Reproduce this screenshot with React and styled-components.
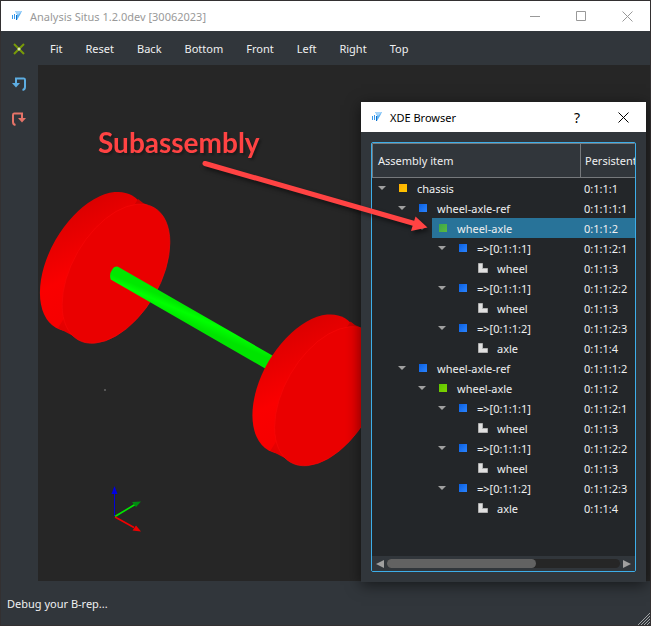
import React from "react";
import styled, { createGlobalStyle } from "styled-components";

const Global = createGlobalStyle`
  * { box-sizing: border-box; }
  body {
    margin: 0;
    background: #333031;
    color: #eff0f1;
    font: 11px/17px "Noto Sans", "Open Sans", sans-serif;
  }
  button {
    padding: 0;
    border: 0;
    background: none;
    color: inherit;
    font: inherit;
  }
  svg { display: block; }
`;

const Desktop = styled.div`
  min-height: 100vh;
  padding: 1px;
  display: flex;
`;

const AppWindow = styled.main`
  position: relative;
  flex: 1;
  min-width: 0;
  display: flex;
  flex-direction: column;
  background: #31363b;
`;

const TitleBar = styled.header`
  height: 30px;
  display: flex;
  align-items: center;
  padding-left: 10px;
  background: #fff;
  color: ${(p) => (p.$active ? "#000" : "#999")};
`;

const Title = styled.h1`
  flex: 1;
  margin: 0;
  padding-left: 7px;
  font-size: 11px;
  font-weight: 400;
  white-space: nowrap;
`;

const CaptionButton = styled.button`
  width: 46px;
  height: 30px;
  display: grid;
  place-items: center;
  font-size: 14px;
`;

const ToolBar = styled.nav`
  height: 34px;
  display: flex;
  align-items: center;
  gap: 23px;
  padding-top: 1px;
`;

const ToolButton = styled.button`
  height: 24px;
  white-space: nowrap;
`;

const IconButton = styled.button`
  width: 26px;
  height: 35px;
  display: grid;
  place-items: center;
  margin-left: ${(p) => (p.$inset ? "5px" : "0")};
  margin-right: ${(p) => (p.$inset ? "-5px" : "0")};
`;

const Workspace = styled.div`
  flex: 1;
  display: flex;
`;

const SideBar = styled.aside`
  width: 37px;
  display: flex;
  flex-direction: column;
  align-items: center;
  padding: 1px 2px 0 0;
`;

const Viewport = styled.section`
  flex: 1;
  min-width: 0;
  background: #262626;
`;

const Scene = styled.svg`
  width: 100%;
  height: auto;
`;

const StatusBar = styled.footer`
  height: 44px;
  display: flex;
  align-items: center;
  justify-content: space-between;
  padding-left: 6px;
`;

const Grip = styled.svg`
  align-self: flex-end;
`;

const Dialog = styled.section`
  position: absolute;
  top: 101px;
  right: 4px;
  width: 285px;
  background: #31363b;
  box-shadow: 0 3px 14px rgba(0, 0, 0, 0.55);
`;

const DialogBody = styled.div`
  padding: 10px;
`;

const TreeFrame = styled.div`
  height: 430px;
  display: flex;
  flex-direction: column;
  border: 1px solid #3daee9;
  border-radius: 2px;
  background: #232629;
  overflow: hidden;
`;

const TreeArea = styled.div`
  flex: 1;
  overflow: hidden;
`;

const Tree = styled.table`
  width: 100%;
  table-layout: fixed;
  border-collapse: separate;
  border-spacing: 0;
`;

const HeadCell = styled.th`
  width: ${(p) => (p.$main ? "209px" : "auto")};
  height: 35px;
  padding: 0 0 0 ${(p) => (p.$main ? "5px" : "4px")};
  border: 1px solid #76797c;
  border-left-width: ${(p) => (p.$main ? "1px" : "0")};
  border-right-width: ${(p) => (p.$main ? "1px" : "0")};
  background: #31363b;
  font-weight: 400;
  text-align: left;
  white-space: nowrap;
`;

const Row = styled.tr`
  height: 20px;
`;

const ItemCell = styled.td`
  padding: 0 0 0 ${(p) => p.$level * 20}px;
`;

const IdCell = styled.td`
  padding: 0 0 0 3px;
  background: ${(p) => (p.$selected ? "#287399" : "none")};
  white-space: nowrap;
`;

const Item = styled.div`
  height: 20px;
  display: flex;
  align-items: center;
`;

const Twisty = styled.button`
  width: 20px;
  height: 20px;
  display: grid;
  place-items: center;
`;

const TwistySpace = styled.span`
  width: 20px;
`;

const ItemLabel = styled.span`
  flex: 1;
  height: 20px;
  display: flex;
  align-items: center;
  gap: 3px;
  background: ${(p) => (p.$selected ? "#287399" : "none")};
  white-space: nowrap;
`;

const Glyph = styled.span`
  width: 22px;
  display: grid;
  place-items: center;
`;

const ScrollRow = styled.div`
  height: 15px;
  display: flex;
  align-items: center;
  gap: 3px;
  padding: 0 4px;
  background: #31363b;
`;

const ScrollTrack = styled.div`
  flex: 1;
  height: 9px;
  border-radius: 5px;
  background: #262626;
`;

const ScrollThumb = styled.div`
  width: 64%;
  height: 9px;
  border-radius: 5px;
  background: #626262;
`;

const Callout = styled.p`
  position: absolute;
  top: 125px;
  left: 97px;
  margin: 0;
  color: #ff4343;
  font: 700 28px/32px Lato, sans-serif;
  filter: drop-shadow(2px 2px 1px rgba(0, 0, 0, 0.3));
`;

const CalloutArrow = styled.svg`
  position: absolute;
  top: 154px;
  right: 217px;
  pointer-events: none;
  filter: drop-shadow(2px 3px 2px rgba(0, 0, 0, 0.5));
`;

const Logo = () => (
  <svg width="12" height="12" viewBox="0 0 12 12" aria-hidden="true">
    <path d="M4 1H11L9 5L6 10H5L6 4.500Z" fill="#63b4f3" />
    <path d="M4 1H11L7 5Z" fill="#a9d6fa" />
    <path d="M1.5 5V9M3.500 4V9" stroke="#3a9aea" />
    <path d="M5.500 5V10" stroke="#0b6fcb" />
  </svg>
);

const CloseGlyph = () => (
  <svg width="11" height="11" viewBox="0 0 11 11" aria-hidden="true">
    <path d="M0.5 0.5L10.5 10.5M10.5 0.5L0.5 10.5" stroke="currentColor" />
  </svg>
);

const TurnGlyph = ({ color, flip }) => (
  <svg width="14" height="14" viewBox="0 0 14 14" fill="none" aria-hidden="true">
    <g transform={flip ? "translate(14 0) scale(-1 1)" : undefined}>
      <path
        d="M4 6V1.5H12Q13 1.5 13 3V10Q13 12.5 10.5 13"
        stroke={color}
        strokeWidth="2"
      />
      <path d="M0 6H8L4 10.5Z" fill={color} />
    </g>
  </svg>
);

const tones = {
  root: ["#ffae00", "#ffc800"],
  ref: ["#0a5fe0", "#2b84ff"],
  group: ["#5cc400", "#80d400"],
  picked: ["#3ba84a", "#5cba40"],
};

const Swatch = styled.span`
  width: 8px;
  height: 8px;
  background: linear-gradient(135deg, ${(p) => tones[p.$type].join(", ")});
`;

const TypeGlyph = ({ type }) =>
  type === "part" ? (
    <svg width="10" height="10" viewBox="0 0 10 10" aria-hidden="true">
      <path d="M0.5 0.5H4.5V5.5H9.5V9.5H0.5Z" fill="#e0e0e0" stroke="#b0b0b0" />
    </svg>
  ) : (
    <Swatch $type={type} />
  );

const subtree = [
  { level: 3, type: "ref", name: "=>[0:1:1:1]", id: "0:1:1:2:1" },
  { level: 4, type: "part", name: "wheel", id: "0:1:1:3" },
  { level: 3, type: "ref", name: "=>[0:1:1:1]", id: "0:1:1:2:2" },
  { level: 4, type: "part", name: "wheel", id: "0:1:1:3" },
  { level: 3, type: "ref", name: "=>[0:1:1:2]", id: "0:1:1:2:3" },
  { level: 4, type: "part", name: "axle", id: "0:1:1:4" },
];

const rows = [
  { level: 0, type: "root", name: "chassis", id: "0:1:1:1" },
  { level: 1, type: "ref", name: "wheel-axle-ref", id: "0:1:1:1:1" },
  { level: 2, type: "picked", name: "wheel-axle", id: "0:1:1:2", selected: true },
  ...subtree,
  { level: 1, type: "ref", name: "wheel-axle-ref", id: "0:1:1:1:2" },
  { level: 2, type: "group", name: "wheel-axle", id: "0:1:1:2" },
  ...subtree,
];

const views = ["Fit", "Reset", "Back", "Bottom", "Front", "Left", "Right", "Top"];

const Wheel = () => (
  <>
    <ellipse cx="94" cy="261.7" rx="76.4" ry="44.2" transform="rotate(-60 94 261.7)" fill="url(#rim)" />
    <path d="M138 199Q142 203 148 205L77 338L58 328Z" fill="url(#rim)" />
    <ellipse
      cx="116"
      cy="273.7"
      rx="76.2"
      ry="44"
      transform="rotate(-60 116 273.7)"
      fill="#ea0000"
      stroke="#f80808"
      strokeWidth="0.6"
    />
  </>
);

const Model = () => (
  <Scene viewBox="38 65 612 516" role="img" aria-label="Two wheels joined by an axle">
    <defs>
      <linearGradient id="rim" gradientUnits="userSpaceOnUse" x1="140" y1="195" x2="50" y2="335">
        <stop offset="0" stopColor="#c80000" />
        <stop offset="0.2" stopColor="#e00000" />
        <stop offset="0.5" stopColor="#fa0000" />
        <stop offset="0.8" stopColor="#f40000" />
        <stop offset="1" stopColor="#d80000" />
      </linearGradient>
      <linearGradient id="rod" gradientUnits="userSpaceOnUse" x1="190" y1="308" x2="184" y2="322">
        <stop offset="0" stopColor="#00e800" />
        <stop offset="0.4" stopColor="#00ff00" />
        <stop offset="1" stopColor="#00e400" />
      </linearGradient>
    </defs>
    <Wheel />
    <path d="M118 266.7L282 361L272 372.5L110.7 279.5Q109 274 112 270Q114 266 118 266.7Z" fill="url(#rod)" />
    <g transform="translate(212.5 122.5)">
      <Wheel />
    </g>
    <rect x="104" y="389" width="2" height="2" fill="#555" />
    <path d="M114.5 516V492" stroke="#0000d8" />
    <path d="M114.5 486L117.5 494H111.5Z" fill="#0000e0" />
    <path d="M115 516.5L135 504.5" stroke="#00e800" strokeWidth="1.6" />
    <path d="M141 501.5L136 507L132 502Z" fill="#008c10" />
    <path d="M115 517L134 527.5" stroke="#f00000" strokeWidth="1.6" />
    <path d="M141 531.5L132.500 530.5L136 525.500Z" fill="#f00000" />
  </Scene>
);

const TreeRow = ({ row }) => (
  <Row>
    <ItemCell $level={row.level}>
      <Item>
        {row.type === "part" ? (
          <TwistySpace />
        ) : (
          <Twisty aria-label={`Collapse ${row.name}`}>
            <svg width="8" height="4" viewBox="0 0 8 4" aria-hidden="true">
              <path d="M0 0H8L4 4Z" fill="#a0a0a0" />
            </svg>
          </Twisty>
        )}
        <ItemLabel $selected={row.selected}>
          <Glyph>
            <TypeGlyph type={row.type} />
          </Glyph>
          {row.name}
        </ItemLabel>
      </Item>
    </ItemCell>
    <IdCell $selected={row.selected}>{row.id}</IdCell>
  </Row>
);

const XdeBrowser = () => (
  <Dialog role="dialog" aria-label="XDE Browser">
    <TitleBar $active>
      <Logo />
      <Title as="h2">XDE Browser</Title>
      <CaptionButton aria-label="Help">?</CaptionButton>
      <CaptionButton aria-label="Close">
        <CloseGlyph />
      </CaptionButton>
    </TitleBar>
    <DialogBody>
      <TreeFrame>
        <TreeArea>
          <Tree>
            <thead>
              <tr>
                <HeadCell $main>Assembly item</HeadCell>
                <HeadCell>Persistent</HeadCell>
              </tr>
            </thead>
            <tbody>
              {rows.map((row, i) => (
                <TreeRow key={i} row={row} />
              ))}
            </tbody>
          </Tree>
        </TreeArea>
        <ScrollRow>
          <button aria-label="Scroll left">
            <svg width="8" height="8" viewBox="0 0 8 8">
              <path d="M8 0V8L0 4Z" fill="#a0a0a0" />
            </svg>
          </button>
          <ScrollTrack>
            <ScrollThumb />
          </ScrollTrack>
          <button aria-label="Scroll right">
            <svg width="8" height="8" viewBox="0 0 8 8">
              <path d="M0 0V8L8 4Z" fill="#a0a0a0" />
            </svg>
          </button>
        </ScrollRow>
      </TreeFrame>
    </DialogBody>
  </Dialog>
);

export default function App() {
  return (
    <Desktop>
      <Global />
      <AppWindow>
        <TitleBar>
          <Logo />
          <Title>Analysis Situs 1.2.0dev [30062023]</Title>
          <CaptionButton aria-label="Minimize">
            <svg width="10" height="10" viewBox="0 0 10 10" aria-hidden="true">
              <path d="M0 5.5H10" stroke="currentColor" />
            </svg>
          </CaptionButton>
          <CaptionButton aria-label="Maximize">
            <svg width="10" height="10" viewBox="0 0 10 10" aria-hidden="true">
              <path d="M0.5 0.5H9.5V9.5H0.5Z" fill="none" stroke="currentColor" />
            </svg>
          </CaptionButton>
          <CaptionButton aria-label="Close">
            <CloseGlyph />
          </CaptionButton>
        </TitleBar>
        <ToolBar>
          <IconButton $inset aria-label="Fit all">
            <svg width="12" height="12" viewBox="0 0 12 12" aria-hidden="true">
              <path d="M1 1L11 11M11 1L1 11" stroke="#789a08" strokeWidth="2" />
              <circle cx="6" cy="6" r="1.5" fill="#dce8b0" />
            </svg>
          </IconButton>
          {views.map((view) => (
            <ToolButton key={view}>{view}</ToolButton>
          ))}
        </ToolBar>
        <Workspace>
          <SideBar>
            <IconButton aria-label="Undo">
              <TurnGlyph color="#5dade2" />
            </IconButton>
            <IconButton aria-label="Redo">
              <TurnGlyph color="#e57368" flip />
            </IconButton>
          </SideBar>
          <Viewport>
            <Model />
          </Viewport>
        </Workspace>
        <StatusBar>
          Debug your B-rep...
          <Grip width="13" height="13" viewBox="0 0 13 13" aria-hidden="true">
            <path d="M1 13L13 1M4 13L13 4M7 13L13 7M10 13L13 10" stroke="#a0a3a5" />
          </Grip>
        </StatusBar>
        <XdeBrowser />
        <Callout>Subassembly</Callout>
        <CalloutArrow width="232" height="82" viewBox="201 155 232 82" aria-hidden="true">
          <path d="M205 163.500L416 224" stroke="#ff4343" strokeWidth="5" strokeLinecap="round" />
          <path d="M427.500 227.500L415.500 216.500L411 231Z" fill="#ff4343" />
        </CalloutArrow>
      </AppWindow>
    </Desktop>
  );
}
